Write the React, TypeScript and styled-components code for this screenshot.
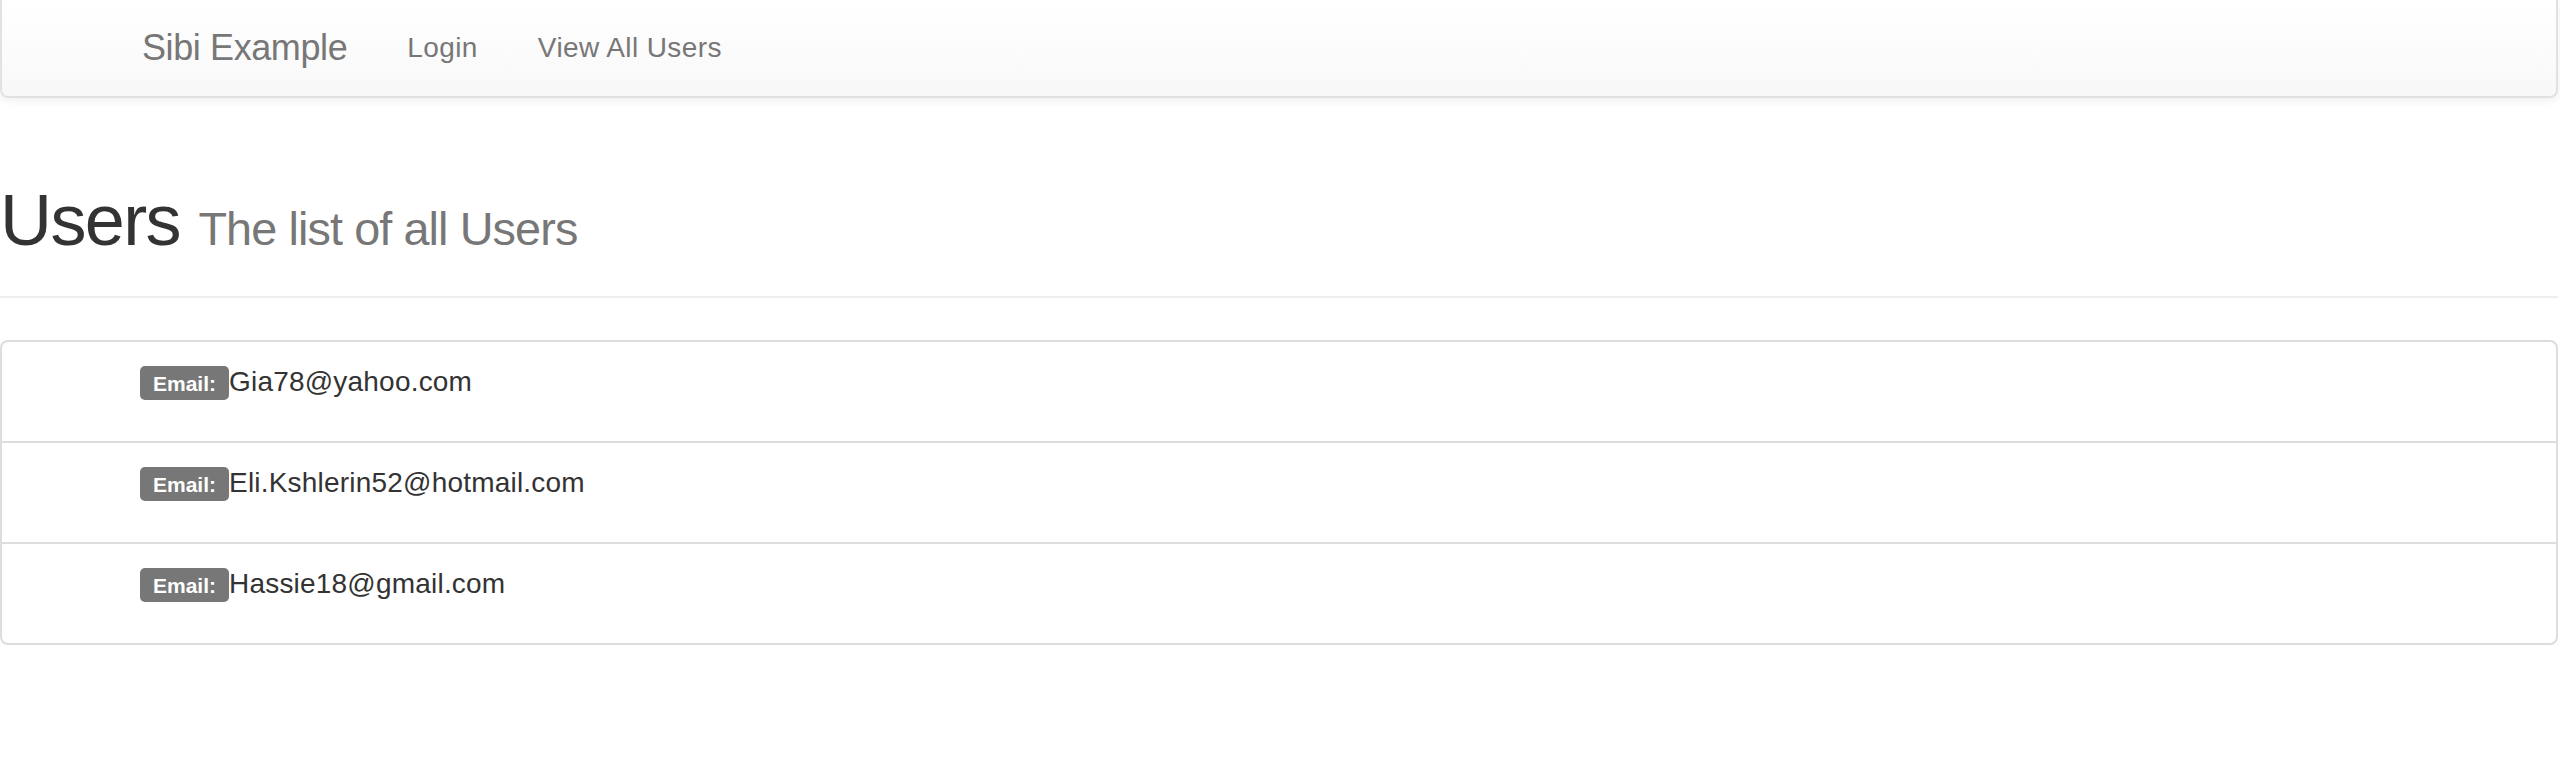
import React from "react";
import styled, { createGlobalStyle } from "styled-components";

const GlobalStyle = createGlobalStyle`
  html, body { margin: 0; padding: 0; background: #fff; }
  body {
    font-family: "Liberation Sans", Helvetica, Arial, sans-serif;
    color: #333;
  }
  * { box-sizing: border-box; }
`;

const Page = styled.div`
  margin-right: 2px;
`;

const Navbar = styled.nav`
  height: 98px;
  display: flex;
  align-items: center;
  padding-left: 110px;
  background: linear-gradient(to bottom, #ffffff 0%, #f8f8f8 100%);
  border: 2px solid #e2e2e2;
  border-top: 0;
  border-radius: 0 0 8px 8px;
  box-shadow: 0 2px 10px rgba(0, 0, 0, 0.075);
`;

const Brand = styled.a`
  font-size: 36px;
  line-height: 40px;
  letter-spacing: -0.4px;
  color: #777;
  padding: 0 30px;
  text-decoration: none;
`;

const NavLink = styled.a`
  font-size: 28px;
  line-height: 40px;
  letter-spacing: 0.4px;
  color: #777;
  padding: 0 30px;
  text-decoration: none;
`;

const PageHeader = styled.header`
  margin: 83px 0 42px;
  padding-bottom: 18px;
  border-bottom: 2px solid #eee;
`;

const Title = styled.h1`
  margin: 0 0 18px;
  font-size: 72px;
  line-height: 79px;
  font-weight: 500;
  letter-spacing: -1.6px;
  color: #333;
`;

const Subtitle = styled.small`
  font-size: 46.8px;
  line-height: 1;
  font-weight: 400;
  letter-spacing: -0.9px;
  color: #777;
`;

const ListGroup = styled.ul`
  list-style: none;
  margin: 0;
  padding: 0;
  border: 2px solid #ddd;
  border-radius: 8px;
`;

const ListItem = styled.li`
  padding: 20px 20px 39px 138px;
  & + & {
    border-top: 2px solid #ddd;
  }
`;

const Line = styled.div`
  font-size: 28px;
  line-height: 40px;
  letter-spacing: 0.2px;
  color: #333;
`;

const Badge = styled.span`
  display: inline-block;
  font-size: 21px;
  line-height: 1;
  font-weight: 700;
  letter-spacing: 0;
  color: #fff;
  background: #777;
  padding: 7px 13px 6px;
  border-radius: 5px;
  vertical-align: baseline;
`;

const users = [
  "Gia78@yahoo.com",
  "Eli.Kshlerin52@hotmail.com",
  "Hassie18@gmail.com",
];

export default function App() {
  return (
    <>
      <GlobalStyle />
      <Page>
        <Navbar>
          <Brand href="#">Sibi Example</Brand>
          <NavLink href="#">Login</NavLink>
          <NavLink href="#">View All Users</NavLink>
        </Navbar>
        <PageHeader>
          <Title>
            Users <Subtitle>The list of all Users</Subtitle>
          </Title>
        </PageHeader>
        <ListGroup>
          {users.map((email) => (
            <ListItem key={email}>
              <Line>
                <Badge>Email:</Badge>
                {email}
              </Line>
            </ListItem>
          ))}
        </ListGroup>
      </Page>
    </>
  );
}
